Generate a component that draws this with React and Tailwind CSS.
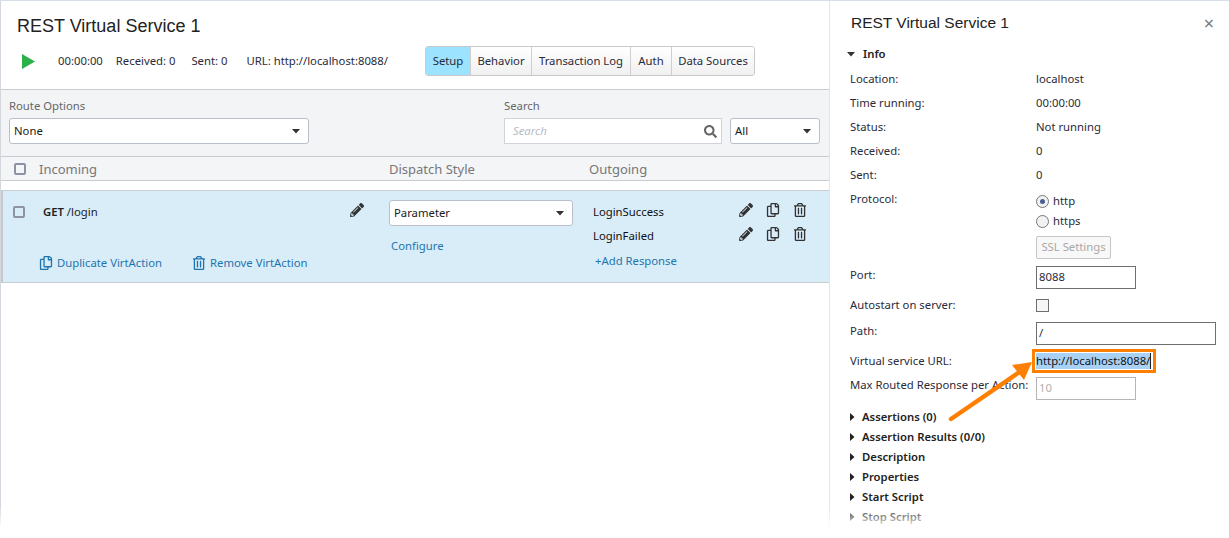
import React from "react";
import { FaPencilAlt, FaRegCopy, FaRegTrashAlt, FaSearch } from "react-icons/fa";

const Caret = ({ className = "" }) => (
  <svg width="8" height="5" viewBox="0 0 10 6" className={className}><path d="M0 0h10L5 5.500z" fill="#333" /></svg>
);
const Tri = ({ light }) => (
  <svg width="5" height="8" viewBox="0 0 5 8" className="shrink-0"><path d="M0 0l4.500 4L0 8z" fill={light ? "#9a9ea3" : "#222"} /></svg>
);

const Select = ({ value, className }) => (
  <div className={`h-[26px] bg-white border border-[#b9c0cc] rounded-[3px] flex items-center justify-between pl-[4px] pr-[8px] text-[#1a1a1a] ${className}`}>
    <span>{value}</span>
    <Caret />
  </div>
);

const Tab = ({ children, active, w }) => (
  <div className={`h-full flex items-center justify-center border-r last:border-r-0 border-[#cfcfcf] ${w} ${active ? "bg-[#9be3ff]" : "bg-gradient-to-b from-white to-[#f0f0f0]"}`}>{children}</div>
);

const InfoRow = ({ label, value }) => (
  <div className="flex h-6 items-center">
    <div className="w-[186px]">{label}</div>
    <div>{value}</div>
  </div>
);

const Section = ({ label, light }) => (
  <div className={`flex items-center h-5 ${light ? "text-[#9a9ea3]" : "text-[#222]"} font-semibold`}>
    <Tri light={light} />
    <span className="ml-[7px]">{label}</span>
  </div>
);

const RowIcons = () => (
  <div className="flex items-center text-[#333] gap-[13px] mb-[4px]">
    <FaPencilAlt size={14} />
    <FaRegCopy size={14} />
    <FaRegTrashAlt size={14} />
  </div>
);

export default function App() {
  return (
    <div className="relative w-[1229px] h-[538px] overflow-hidden bg-white flex border-t border-[#d8dee8] text-[11.3px] text-[#2b2b3a] font-['Noto_Sans','Open_Sans',sans-serif]">
      {/* left */}
      <div className="w-[829px] shrink-0 flex flex-col border-l border-[#d4d8de]">
        <div className="h-[89px] shrink-0 border-b border-[#c9ccd1] pl-[16px] pr-[74px] flex flex-col">
          <div className="font-['Liberation_Sans',sans-serif] text-[18px] leading-[22px] mt-[14px] text-[#222]">REST Virtual Service 1</div>
          <div className="flex items-center h-[30px] mt-[9px]">
            <svg width="13" height="15" viewBox="0 0 13 15" className="ml-[5px]"><path d="M0 0l13 7.500L0 15z" fill="#2bb04a" /></svg>
            <span className="ml-[23px] pt-px">00:00:00</span>
            <span className="ml-[13px] pt-px">Received: 0</span>
            <span className="ml-[16px] pt-px">Sent: 0</span>
            <span className="ml-[19px] pt-px">URL: http://localhost:8088/</span>
            <div className="ml-auto h-[30px] w-[330px] flex border border-[#c9c9c9] rounded-[3px] overflow-hidden text-[#2a2a3a]">
              <Tab active w="w-[45px]">Setup</Tab>
              <Tab w="w-[61px]">Behavior</Tab>
              <Tab w="w-[99px]">Transaction Log</Tab>
              <Tab w="w-[41px]">Auth</Tab>
              <Tab w="w-[82px]">Data Sources</Tab>
            </div>
          </div>
        </div>
        <div className="h-[67px] shrink-0 bg-[#f3f4f6] border-b border-[#c9ccd1] flex pl-[8px] pt-[8px] text-[#666]">
          <div className="w-[495px]">
            <div className="leading-[16px] h-[20px]">Route Options</div>
            <Select value="None" className="w-[300px]" />
          </div>
          <div>
            <div className="leading-[16px] h-[20px]">Search</div>
            <div className="w-[218px] h-[26px] bg-white border border-[#cfd3da] flex items-center justify-between pl-[8px] pr-[4px] text-[#b8bcc4] italic">
              <span>Search</span>
              <FaSearch size={13} className="text-[#666]" />
            </div>
          </div>
          <div className="pl-[8px] pt-[20px]">
            <Select value="All" className="w-[90px]" />
          </div>
        </div>
        <div className="h-[24px] shrink-0 bg-[#f4f5f7] border-b border-[#c9ccd1] flex items-center text-[13px] text-[#777]">
          <div className="w-[12px] h-[12px] ml-[13px] border-2 border-[#8c93a3] rounded-[2px]"></div>
          <span className="ml-[13px] w-[350px] pt-[2px]">Incoming</span>
          <span className="w-[200px] pt-[2px]">Dispatch Style</span>
          <span className="pt-[2px]">Outgoing</span>
        </div>
        <div className="h-[9px] shrink-0"></div>
        <div className="h-[93px] shrink-0 bg-[#d9edf9] border-t border-b border-[#c9ccd1] border-l-2 border-l-[#c5c9ce] flex">
          <div className="w-[386px] pl-[10px]">
            <div className="flex items-start pt-[14px]">
              <div className="w-[12px] h-[12px] mt-px border-2 border-[#8c93a3] rounded-[2px] shrink-0"></div>
              <div className="ml-[18px] leading-[14px] text-[#222]"><span className="font-semibold">GET</span> /login</div>
              <FaPencilAlt size={14} className="ml-auto mr-[25px] -mt-[2px] text-[#333]" />
            </div>
            <div className="flex items-center mt-[36px] ml-[26px] text-[#1f74ad]">
              <FaRegCopy size={14} />
              <span className="ml-[4px]">Duplicate VirtAction</span>
              <FaRegTrashAlt size={14} className="ml-[30px]" />
              <span className="ml-[4px]">Remove VirtAction</span>
            </div>
          </div>
          <div className="w-[200px] pt-[9px]">
            <Select value="Parameter" className="w-[184px]" />
            <div className="mt-[11px] ml-[2px] text-[#1f74ad] leading-[16px] pt-px">Configure</div>
          </div>
          <div className="w-[240px] pt-[12px] pl-[4px] text-[#111]">
            <div className="flex items-center justify-between h-[18px] pr-[22px]"><span className="pt-px">LoginSuccess</span><RowIcons /></div>
            <div className="flex items-center justify-between h-[18px] mt-[6px] pr-[22px]"><span className="pt-px">LoginFailed</span><RowIcons /></div>
            <div className="mt-[8px] ml-[2px] text-[#1f74ad] leading-[16px]">+Add Response</div>
          </div>
        </div>
      </div>
      {/* right */}
      <div className="flex-1 border-l border-[#e3e5e8] pl-[20px] pr-[13px] relative">
        <div className="flex items-center justify-between h-[20px] mt-[12px]">
          <span className="font-['Liberation_Sans',sans-serif] text-[15.500px] ml-px text-[#222]">REST Virtual Service 1</span>
          <span className="text-[#777] text-[18px] leading-none mr-[2px]">×</span>
        </div>
        <div className="flex items-center h-5 mt-[11px] font-semibold text-[#222]">
          <Caret className="-ml-[3px]" />
          <span className="ml-[8px]">Info</span>
        </div>
        <div className="mt-[3px]">
          <InfoRow label="Location:" value="localhost" />
          <InfoRow label="Time running:" value="00:00:00" />
          <InfoRow label="Status:" value="Not running" />
          <InfoRow label="Received:" value="0" />
          <InfoRow label="Sent:" value="0" />
        </div>
        <div className="flex h-[78px] mt-px">
          <div className="w-[186px] leading-[22px]">Protocol:</div>
          <div className="flex flex-col">
            <div className="flex items-center h-5 mt-[3px]">
              <span className="w-[13px] h-[13px] rounded-full border border-[#777] flex items-center justify-center bg-[#f2f2f2]"><span className="w-[5px] h-[5px] rounded-full bg-[#4a5f94]"></span></span>
              <span className="ml-[4px]">http</span>
            </div>
            <div className="flex items-center h-5">
              <span className="w-[13px] h-[13px] rounded-full border border-[#777] bg-[#f2f2f2]"></span>
              <span className="ml-[4px]">https</span>
            </div>
            <div className="mt-[5px] w-[75px] h-[23px] flex items-center justify-center border border-[#c6c6c6] rounded-[2px] text-[#a8a8a8] bg-[#f8f8f8]">SSL Settings</div>
          </div>
        </div>
        <div className="flex h-[23px]">
          <div className="w-[186px] leading-[18px]">Port:</div>
          <div className="w-[100px] h-[23px] border border-[#6e6e6e] pl-[2px] flex items-center">8088</div>
        </div>
        <div className="flex items-center h-[13px] mt-[10px]">
          <div className="w-[186px]">Autostart on server:</div>
          <div className="w-[13px] h-[13px] border border-[#6e6e6e] bg-[#f6f6f6]"></div>
        </div>
        <div className="flex h-[23px] mt-[10px]">
          <div className="w-[186px] leading-[18px]">Path:</div>
          <div className="w-[180px] h-[23px] border border-[#6e6e6e] pl-[2px] flex items-center">/</div>
        </div>
        <div className="flex items-center h-[24px] mt-[4px]">
          <div className="w-[186px]">Virtual service URL:</div>
          <div className="-ml-[4px] border-[3px] border-[#ff7f00] pl-px pr-[2px] h-[24px] flex items-center">
            <span className="bg-[#a9d1f5] h-[16px] leading-[16px] text-[#111] border-r border-[#222]">http://localhost:8088/</span>
          </div>
        </div>
        <div className="flex h-[23px] mt-[4px]">
          <div className="w-[186px] leading-[16px] whitespace-nowrap">Max Routed Response per Action:</div>
          <div className="w-[100px] h-[23px] border border-[#b5b5b5] pl-[2px] flex items-center text-[#b0b0b0]">10</div>
        </div>
        <div className="mt-[7px]">
          <Section label="Assertions (0)" />
          <Section label="Assertion Results (0/0)" />
          <Section label="Description" />
          <Section label="Properties" />
          <Section label="Start Script" />
          <Section label="Stop Script" />
          <Section label="On Request Script" />
        </div>
      </div>
      {/* arrow */}
      <svg className="absolute left-[940px] top-[357px] pointer-events-none" width="100" height="66" viewBox="0 0 100 66">
        <path d="M11 61L78 15" stroke="#ff7f00" strokeWidth="4.500" strokeLinecap="round" fill="none" />
        <path d="M92 4L72 7L84 22z" fill="#ff7f00" />
      </svg>
      {/* bottom fade */}
      <div className="absolute left-0 right-0 bottom-0 h-[32px] bg-gradient-to-b from-transparent to-white to-[70%] pointer-events-none"></div>
    </div>
  );
}
